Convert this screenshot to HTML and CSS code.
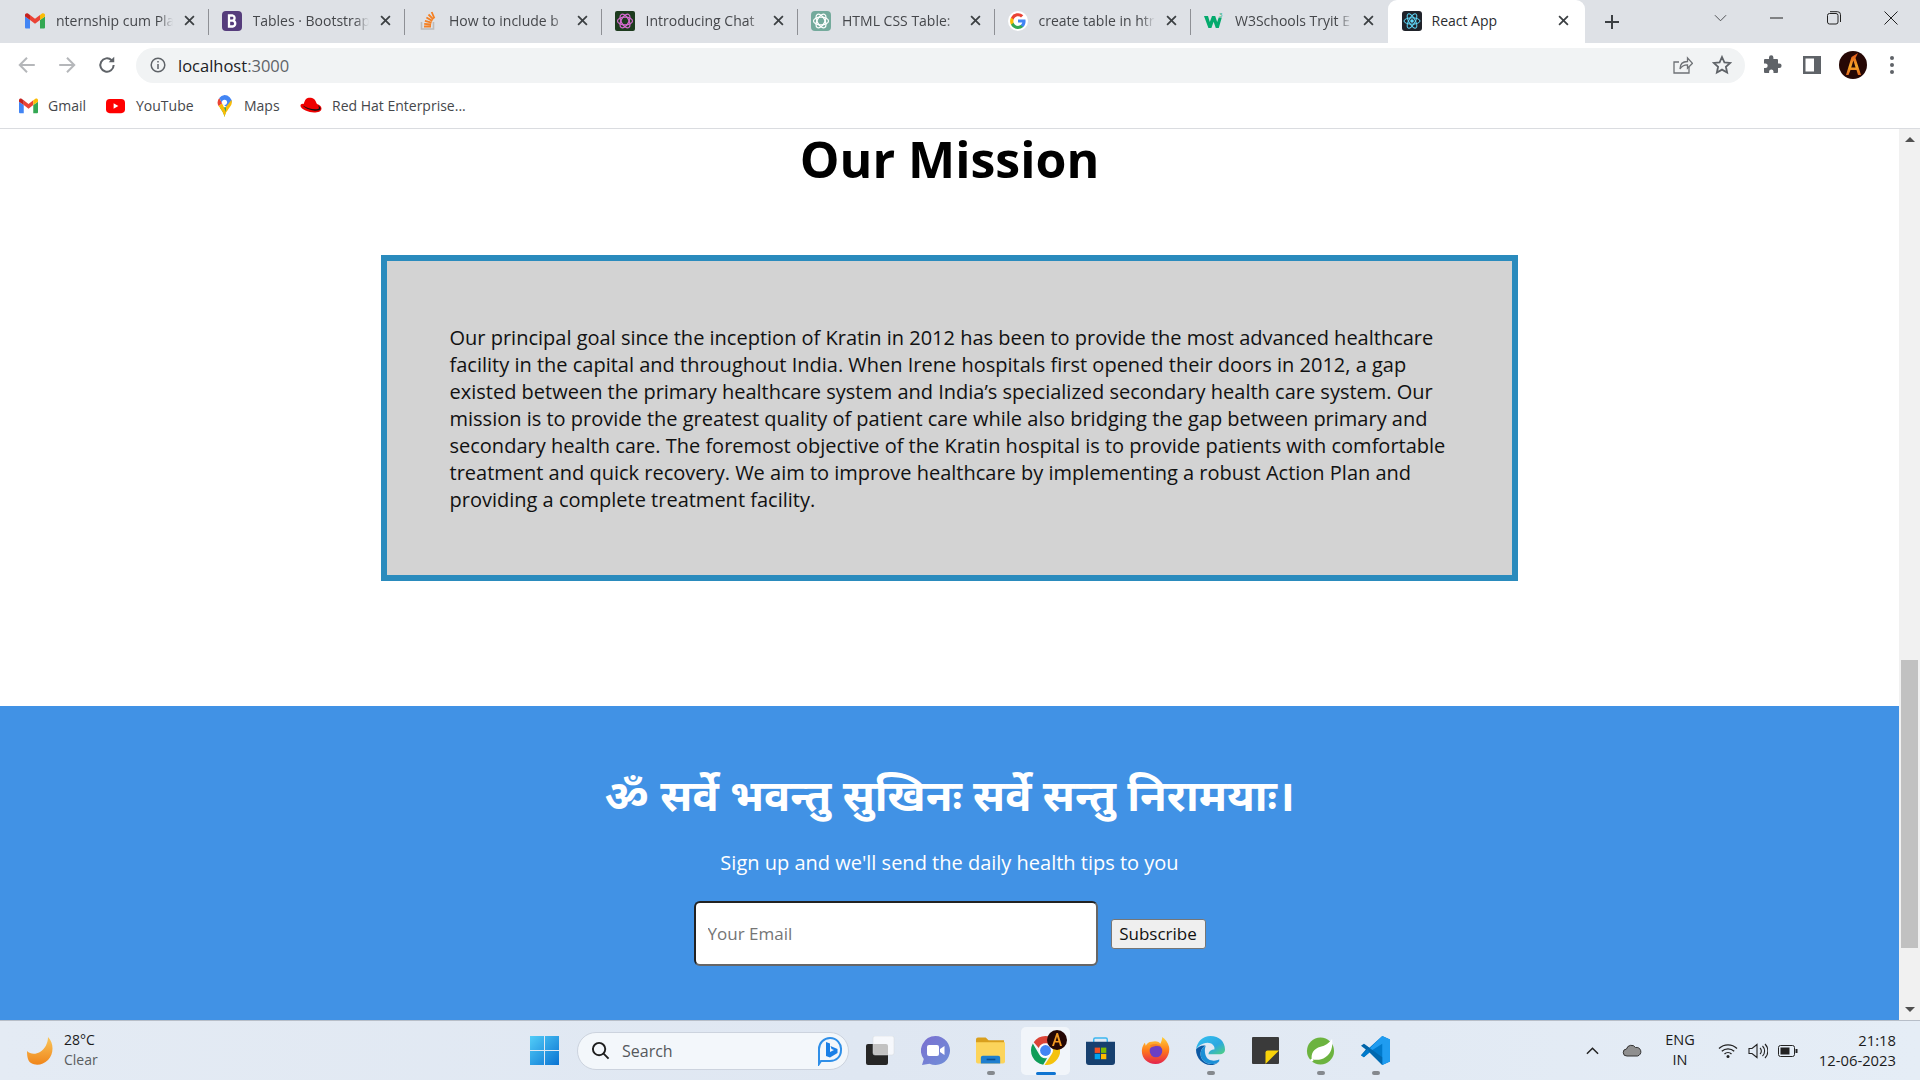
FILE: index.html
```html
<!DOCTYPE html>
<html lang="en">
<head>
<meta charset="utf-8">
<title>React App</title>
<link rel="stylesheet" href="styles.css">
</head>
<body>
<div class="screen">
  <header class="chrome">
    <div class="tabstrip">
      <div class="tab">
        <svg class="favicon" viewBox="0 0 20 16"><path fill="#4285f4" d="M1 15.500h4V7L0 3.500V14.500a1 1 0 0 0 1 1z"/><path fill="#34a853" d="M15 15.500h4a1 1 0 0 0 1-1V3.500L15 7z"/><path fill="#ea4335" d="M5 7V2l5 3.800L15 2v5l-5 3.800z"/><path fill="#c5221f" d="M0 2v1.500L5 7V2L3 .6C1.700-.3 0 .5 0 2z"/><path fill="#fbbc04" d="M15 2v5l5-3.500V2c0-1.500-1.700-2.300-3-1.400z"/></svg>
        <span class="tab-title">nternship cum Pla</span>
        <svg class="tab-close" viewBox="0 0 10 10"><path d="M1 1l8 8M9 1l-8 8"/></svg>
      </div>
      <div class="tab">
        <svg class="favicon" viewBox="0 0 20 20"><rect width="20" height="20" rx="4" fill="#563d7c"/><path fill="none" stroke="#fff" stroke-width="2.300" d="M7 4.500v11h4a3 3 0 0 0 0-5.800H7h3.600a2.700 2.700 0 0 0 0-5.200z"/></svg>
        <span class="tab-title">Tables · Bootstrap</span>
        <svg class="tab-close" viewBox="0 0 10 10"><path d="M1 1l8 8M9 1l-8 8"/></svg>
      </div>
      <div class="tab">
        <svg class="favicon" viewBox="0 0 20 20"><path fill="none" stroke="#bcbbbb" stroke-width="1.600" d="M3.500 11v7h12v-7"/><path fill="none" stroke="#f48024" stroke-width="1.800" d="M6 15.500h7M6.200 12.800l6.900.7M6.900 9.800l6.700 1.800M8.400 6.500l6 3.400M10.500 3.500l4.800 4.900M13.700 1l2.700 6.300"/></svg>
        <span class="tab-title">How to include b</span>
        <svg class="tab-close" viewBox="0 0 10 10"><path d="M1 1l8 8M9 1l-8 8"/></svg>
      </div>
      <div class="tab">
        <svg class="favicon" viewBox="0 0 20 20"><rect width="20" height="20" rx="2" fill="#1d3b1e"/><g fill="none" stroke="#d56bd0" stroke-width="1.200"><ellipse cx="10" cy="10" rx="7.500" ry="3.800"/><ellipse cx="10" cy="10" rx="7.500" ry="3.800" transform="rotate(60 10 10)"/><ellipse cx="10" cy="10" rx="7.500" ry="3.800" transform="rotate(120 10 10)"/></g></svg>
        <span class="tab-title">Introducing Chat</span>
        <svg class="tab-close" viewBox="0 0 10 10"><path d="M1 1l8 8M9 1l-8 8"/></svg>
      </div>
      <div class="tab">
        <svg class="favicon" viewBox="0 0 20 20"><rect width="20" height="20" rx="4" fill="#74aa9c"/><g fill="none" stroke="#fff" stroke-width="1.200"><ellipse cx="10" cy="10" rx="7.500" ry="3.800"/><ellipse cx="10" cy="10" rx="7.500" ry="3.800" transform="rotate(60 10 10)"/><ellipse cx="10" cy="10" rx="7.500" ry="3.800" transform="rotate(120 10 10)"/></g></svg>
        <span class="tab-title">HTML CSS Table:</span>
        <svg class="tab-close" viewBox="0 0 10 10"><path d="M1 1l8 8M9 1l-8 8"/></svg>
      </div>
      <div class="tab">
        <svg class="favicon" viewBox="0 0 20 20"><circle cx="10" cy="10" r="10" fill="#fff"/><path fill="#4285f4" d="M17.600 10.200c0-.6-.1-1.100-.2-1.600H10v3h4.300c-.2 1-.7 1.800-1.600 2.400v2h2.500c1.500-1.400 2.400-3.400 2.400-5.800z"/><path fill="#34a853" d="M10 18c2.100 0 3.800-.7 5.200-1.900l-2.500-2c-.7.500-1.600.8-2.700.8-2 0-3.800-1.400-4.400-3.200H3v2C4.300 16.300 7 18 10 18z"/><path fill="#fbbc05" d="M5.600 11.700c-.3-1-.3-2.200 0-3.300v-2H3a8 8 0 0 0 0 7.300z"/><path fill="#ea4335" d="M10 5.200c1.200 0 2.200.4 3 1.200l2.300-2.200A8 8 0 0 0 3 6.400l2.600 2C6.200 6.600 8 5.200 10 5.200z"/></svg>
        <span class="tab-title">create table in htr</span>
        <svg class="tab-close" viewBox="0 0 10 10"><path d="M1 1l8 8M9 1l-8 8"/></svg>
      </div>
      <div class="tab tab-last">
        <svg class="favicon" viewBox="0 0 20 20"><path fill="#04aa6d" d="M0 5h4l1.800 6L8 5h3.200l2 6 1.500-4.500h3.100L14.800 17h-3l-2.200-6.200L7.400 17h-3z"/><text class="w3-sup" x="15" y="6">3</text></svg>
        <span class="tab-title">W3Schools Tryit E</span>
        <svg class="tab-close" viewBox="0 0 10 10"><path d="M1 1l8 8M9 1l-8 8"/></svg>
      </div>
      <div class="tab tab-active">
        <svg class="favicon" viewBox="0 0 20 20"><rect width="20" height="20" rx="3" fill="#20232a"/><circle cx="10" cy="10" r="1.800" fill="#61dafb"/><g fill="none" stroke="#61dafb" stroke-width="1"><ellipse cx="10" cy="10" rx="8" ry="3.200"/><ellipse cx="10" cy="10" rx="8" ry="3.200" transform="rotate(60 10 10)"/><ellipse cx="10" cy="10" rx="8" ry="3.200" transform="rotate(120 10 10)"/></g></svg>
        <span class="tab-title">React App</span>
        <svg class="tab-close" viewBox="0 0 10 10"><path d="M1 1l8 8M9 1l-8 8"/></svg>
      </div>
      <svg class="new-tab" viewBox="0 0 16 16"><path d="M8 1v14M1 8h14"/></svg>
      <div class="win-controls">
        <svg class="win-chevron" viewBox="0 0 14 8"><path d="M1 1l6 6 6-6"/></svg>
        <div class="win-btn"><svg viewBox="0 0 14 14"><path d="M0 7h13"/></svg></div>
        <div class="win-btn"><svg viewBox="0 0 14 14"><rect x=".5" y="2.500" width="10.500" height="10.500" rx="2"/><path d="M3 .7h7.500a3 3 0 0 1 3 3V11"/></svg></div>
        <div class="win-btn"><svg viewBox="0 0 14 14"><path d="M.5.500l13 13M13.500.500l-13 13"/></svg></div>
      </div>
    </div>
    <div class="toolbar">
      <svg class="nav-icon nav-off" viewBox="0 0 18 18"><path d="M16 9H3M9 2.500L2.500 9 9 15.500"/></svg>
      <svg class="nav-icon nav-off" viewBox="0 0 18 18"><path d="M2 9h13M9 2.500L15.500 9 9 15.500"/></svg>
      <svg class="nav-icon" viewBox="0 0 18 18"><path d="M15 9a6 6 0 1 1-1.800-4.300"/><path class="nav-fill" d="M15.500 1.500v5h-5z"/></svg>
      <div class="omnibox">
        <svg class="info-icon" viewBox="0 0 16 16"><circle cx="8" cy="8" r="6.800"/><path d="M8 7v5M8 4v1.600"/></svg>
        <span class="url">localhost<span class="url-port">:3000</span></span>
        <svg class="share-icon" viewBox="0 0 20 20"><path d="M16 12v6H1V7h5"/><path d="M7 14c0-5 3-7.500 7.500-7.500V3l5 5.300-5 5V9.800C11 9.800 8.500 11 7 14z"/></svg>
        <svg class="star-icon" viewBox="0 0 20 20"><path d="M10 2l2.400 5.300 5.800.6-4.300 3.900 1.200 5.700L10 14.600l-5.100 2.900 1.200-5.700L1.800 7.900l5.800-.6z"/></svg>
      </div>
      <svg class="puzzle" viewBox="0 0 20 20"><path d="M7 2.500a2.200 2.200 0 0 1 4.400 0V4H15a1 1 0 0 1 1 1v3.500h1.300a2.300 2.300 0 0 1 0 4.600H16V17a1 1 0 0 1-1 1h-3.500v-1.400a2.200 2.200 0 0 0-4.400 0V18H3a1 1 0 0 1-1-1v-3.900h1.400a2.300 2.300 0 0 0 0-4.600H2V5a1 1 0 0 1 1-1h4z"/></svg>
      <svg class="side-panel" viewBox="0 0 18 18"><path fill-rule="evenodd" d="M0 0h18v18H0zM2.500 2.500v13H11v-13z"/></svg>
      <svg class="avatar" viewBox="0 0 28 28"><defs><linearGradient id="fireA" x1="0" y1="0" x2="0" y2="1"><stop offset="0" stop-color="#e2501a"/><stop offset=".6" stop-color="#f7a928"/><stop offset="1" stop-color="#e0641a"/></linearGradient></defs><circle cx="14" cy="14" r="14" fill="#260805"/><path d="M7 24L12.500 6 19 2l-2.500 5L22 24h-3l-1.500-5h-6L9.500 24zM12.200 16.500h4.400L14.400 9.500z" fill="url(#fireA)"/></svg>
      <svg class="menu-dots" viewBox="0 0 4 18"><circle cx="2" cy="2" r="2"/><circle cx="2" cy="9" r="2"/><circle cx="2" cy="16" r="2"/></svg>
    </div>
    <nav class="bookmarks">
      <div class="bookmark bm-gmail"><svg class="bm-icon" viewBox="0 0 20 16"><path fill="#4285f4" d="M1 15.500h4V7L0 3.500V14.500a1 1 0 0 0 1 1z"/><path fill="#34a853" d="M15 15.500h4a1 1 0 0 0 1-1V3.500L15 7z"/><path fill="#ea4335" d="M5 7V2l5 3.800L15 2v5l-5 3.800z"/><path fill="#c5221f" d="M0 2v1.500L5 7V2L3 .6C1.700-.3 0 .5 0 2z"/><path fill="#fbbc04" d="M15 2v5l5-3.500V2c0-1.500-1.700-2.300-3-1.400z"/></svg>Gmail</div>
      <div class="bookmark bm-yt"><svg class="bm-icon" viewBox="0 0 20 16"><rect width="20" height="15" y=".5" rx="4" fill="#f00"/><path d="M8 5l5 3-5 3z" fill="#fff"/></svg>YouTube</div>
      <div class="bookmark bm-maps"><svg class="bm-pin" viewBox="0 0 16 24"><path fill="#34a853" d="M3 14c2 3 4 5 5 10l3-11z"/><path fill="#fbbc04" d="M1.500 12L3 14c2 3 4 5 5 10 .4-2 1-3.500 1.800-5L5.500 9z"/><path fill="#ea4335" d="M2.300 3.200A8 8 0 0 0 1.500 12L5.500 9z"/><path fill="#4285f4" d="M8 0a8 8 0 0 0-5.700 3.200L5.500 9l4.500 4 3-3.500L16 8a8 8 0 0 0-8-8z"/><path fill="#fbbc04" d="M16 8c0 3-2 5-3.500 7L9.800 19l-.3-6 6-7.500c.3.800.5 1.600.5 2.500z"/><circle cx="8" cy="8" r="2.800" fill="#fff"/></svg>Maps</div>
      <div class="bookmark bm-rh"><svg class="bm-icon" viewBox="0 0 22 18"><path fill="#e00" d="M6 2c2-2 6-1.500 8 0 1.500 1 2 3.500 3 5 2.500.8 4.500 2.500 4.500 4.500 0 3-3.500 4-7.500 4-5 0-13-3-13.500-6.500C.3 7.500 2 6.500 3.700 7 4.300 5 5 3 6 2z"/><path fill="#111" d="M3 8.500c4 2.500 10 4.500 15 3.500 1-.2 1.500-1.500 0-3.500.5-.2 2.500 1.500 2.500 3 0 2-4 2.500-7 2-4-.6-9-2.500-10.500-5z"/></svg>Red Hat Enterprise...</div>
    </nav>
  </header>

  <div class="viewport">
    <main class="page">
      <h1 class="mission-title">Our Mission</h1>
      <section class="mission-box">
        <p class="mission-text">Our principal goal since the inception of Kratin in 2012 has been to provide the most advanced healthcare facility in the capital and throughout India. When Irene hospitals first opened their doors in 2012, a gap existed between the primary healthcare system and India’s specialized secondary health care system. Our mission is to provide the greatest quality of patient care while also bridging the gap between primary and secondary health care. The foremost objective of the Kratin hospital is to provide patients with comfortable treatment and quick recovery. We aim to improve healthcare by implementing a robust Action Plan and providing a complete treatment facility.</p>
      </section>
      <footer class="newsletter">
        <h2 class="shloka">ॐ सर्वे भवन्तु सुखिनः सर्वे सन्तु निरामयाः।</h2>
        <p class="signup-text">Sign up and we'll send the daily health tips to you</p>
        <form class="signup-form">
          <input class="email-input" type="email" placeholder="Your Email">
          <button class="subscribe-btn" type="button">Subscribe</button>
        </form>
      </footer>
    </main>
    <aside class="scrollbar">
      <div class="sb-arrow sb-up"></div>
      <div class="sb-track"><div class="sb-thumb"></div></div>
      <div class="sb-arrow sb-down"></div>
    </aside>
  </div>

  <footer class="taskbar">
    <div class="weather">
      <svg class="moon" viewBox="0 0 28 28"><defs><linearGradient id="moonG" x1="0" y1="0" x2="0" y2="1"><stop offset="0" stop-color="#f9c65a"/><stop offset="1" stop-color="#f0851a"/></linearGradient></defs><path fill="url(#moonG)" d="M21 0c6 6 6 17 0 23-5 5-12 6-17 3C1 24 0 20 0 14c3 3 8 4 13 1 5-3 8-9 8-15z"/></svg>
      <div class="weather-text"><span class="temp">28°C</span><span class="cond">Clear</span></div>
    </div>
    <svg class="start" viewBox="0 0 29 29"><defs><linearGradient id="winG" x1="0" y1="0" x2="1" y2="1"><stop offset="0" stop-color="#52cdf8"/><stop offset="1" stop-color="#0a73d2"/></linearGradient></defs><path fill="url(#winG)" d="M0 0h14v14H0zM15 0h14v14H15zM0 15h14v14H0zM15 15h14v14H15z"/></svg>
    <div class="search-pill">
      <svg class="search-glass" viewBox="0 0 20 20"><circle cx="8.500" cy="8.500" r="6.500"/><path d="M13 13l5.500 5.500"/></svg>
      <span class="search-label">Search</span>
      <svg class="bing" viewBox="0 0 26 30"><path fill="none" stroke="#2f8fe8" stroke-width="2" d="M13 2a11 11 0 0 1 11 12c0 7-5 11-11 11H4l-2 3V13A11 11 0 0 1 13 2z"/><path fill="#1a7fe6" d="M9 6l4 1.500V16l4-2-2.500-1-1-3 7 3v4l-7.500 4.500L9 20z"/></svg>
    </div>
    <div class="apps">
      <div class="app"><svg class="app-icon" viewBox="0 0 29 29"><rect x="0" y="8" width="22" height="21" rx="2" fill="#262626"/><rect x="7" y="0" width="21" height="19" rx="2" fill="#fff" fill-opacity=".72" stroke="#d5d8dc" stroke-width=".5"/></svg></div>
      <div class="app"><svg class="app-icon" viewBox="0 0 29 29"><defs><linearGradient id="teamsG" x1="0" y1="0" x2="1" y2="1"><stop offset="0" stop-color="#7b6fd0"/><stop offset="1" stop-color="#6f8fd8"/></linearGradient></defs><path fill="url(#teamsG)" d="M14.500 0a14.500 14.500 0 1 1-6 27.700L1 29l1.800-6A14.500 14.500 0 0 1 14.500 0z"/><rect x="6" y="9" width="12" height="11" rx="2" fill="#fff"/><path fill="#fff" d="M19 13l4.500-3v9L19 16z"/></svg></div>
      <div class="app app-on"><svg class="app-icon" viewBox="0 0 30 27"><path fill="#d99f1d" d="M0 2a2 2 0 0 1 2-2h8l3 3h16v6H0z"/><path fill="#fcd45b" d="M0 5h30v20a2 2 0 0 1-2 2H2a2 2 0 0 1-2-2z"/><path fill="#1f7fcf" d="M5 21a2 2 0 0 1 2-2h16a2 2 0 0 1 2 2v6H5z"/><rect x="11" y="22" width="9" height="1.600" fill="#0b4e8f"/></svg><i class="app-dot"></i></div>
      <div class="app app-chrome"><svg class="app-icon" viewBox="0 0 30 30"><path fill="#db4437" d="M15 0a15 15 0 0 1 13 7.500H15a7.500 7.500 0 0 0-7 4.800L2.800 6.400A15 15 0 0 1 15 0z"/><path fill="#0f9d58" d="M1.900 7.700l6.500 11.200a7.500 7.500 0 0 0 8.300 3.800l-4.100 7.100A15 15 0 0 1 1.900 7.700z"/><path fill="#f4c20d" d="M28.600 8.500H20a7.500 7.500 0 0 1 1.500 10.200L14 30A15 15 0 0 0 28.600 8.500z"/><circle cx="15" cy="15" r="6.800" fill="#fff"/><circle cx="15" cy="15" r="5.600" fill="#4285f4"/></svg><svg class="app-badge" viewBox="0 0 20 20"><circle cx="10" cy="10" r="10" fill="#260805"/><path d="M5 16L9.500 3h1.500L15 16h-2l-1-3.500H8L7 16zM8.700 11h2.700L10 6.500z" fill="#f39a22"/></svg><i class="app-line"></i></div>
      <div class="app"><svg class="app-icon" viewBox="0 0 30 30"><path fill="none" stroke="#3bb6f0" stroke-width="1.500" d="M8 8V3.500a1.500 1.500 0 0 1 1.500-1.500h11A1.500 1.500 0 0 1 22 3.500V8"/><path fill="#17406f" d="M0 6h30v21a3 3 0 0 1-3 3H3a3 3 0 0 1-3-3z"/><rect x="9" y="12" width="5.500" height="5.500" fill="#f25022"/><rect x="15.500" y="12" width="5.500" height="5.500" fill="#7fba00"/><rect x="9" y="18.500" width="5.500" height="5.500" fill="#00a4ef"/><rect x="15.500" y="18.500" width="5.500" height="5.500" fill="#ffb900"/></svg></div>
      <div class="app"><svg class="app-icon" viewBox="0 0 30 30"><defs><linearGradient id="ffG" x1="0" y1="0" x2="0" y2="1"><stop offset="0" stop-color="#ffd23a"/><stop offset=".5" stop-color="#ff7a1a"/><stop offset="1" stop-color="#e3224e"/></linearGradient></defs><path fill="url(#ffG)" d="M22 1c3 2 6 6 7 10 1.500 8-4 18-14 18C6 29 0 22 1 14c.3-3 2-6 3-7l1 3c1-2 3-4 6-4 3-1 7-1 9 2 1-2 2-5 2-7z"/><circle cx="15.500" cy="15.500" r="6.500" fill="#6b3fc4"/><path fill="#f57f25" d="M9 10c3-2 9-2 12 1-3-1-8-1-10 1z"/></svg></div>
      <div class="app app-on"><svg class="app-icon" viewBox="0 0 30 30"><defs><linearGradient id="edgeG" x1="0" y1="0" x2="1" y2="1"><stop offset="0" stop-color="#35c1f1"/><stop offset=".6" stop-color="#2ba8e0"/><stop offset="1" stop-color="#52d37a"/></linearGradient></defs><path fill="url(#edgeG)" d="M15 0c9 0 15 6 15 14 0 3-2 5-6 5H13c0-3 3-5 6-5 1-4-3-7-7-7-6 0-10 4-12 7C1 6 7 0 15 0z"/><path fill="#0c59a4" d="M0 14c2-3 6-5 10-4-4 2-6 6-5 11 1 4 5 8 11 8 3 0 6-1 8-3-2 3-6 4-9 4C7 30 0 23 0 14z"/><path fill="#1b8fd6" d="M10 10c-4 2-6 6-5 11 1 4 5 8 11 8 3 0 6-1 8-3v-2c-3 2-8 2-11 0-3-2-5-8-3-14z"/></svg><i class="app-dot"></i></div>
      <div class="app"><svg class="app-icon app-sticky" viewBox="0 0 26 26"><rect width="26" height="26" rx="1" fill="#3a3a3a"/><path fill="#f8d30a" d="M13 26V15a2 2 0 0 1 2-2h11z"/></svg></div>
      <div class="app app-on"><svg class="app-icon" viewBox="0 0 30 30"><circle cx="15" cy="15.500" r="14" fill="#6cb33f"/><path fill="#fff" d="M27 3c1 8-1 15-7 19-4 3-10 3-14 2-1-6 2-11 9-13 5-1 9-4 12-8z"/><circle cx="6" cy="25" r="1.500" fill="#fff"/></svg><i class="app-dot"></i></div>
      <div class="app app-on"><svg class="app-icon" viewBox="0 0 30 30"><path fill="#0065a9" d="M0 10l3-2 8 6-8 8-3-2 5-6z"/><path fill="#007acc" d="M22 0l8 3.500v23L22 30 9 17l-6 5-3-2 22-20z"/><path fill="#1f9cf0" d="M22 0l8 3.500v23L22 30V8l-11 7L9 13z"/><path fill="#0065a9" d="M3 8l19 14v8L9 17z" opacity=".85"/></svg><i class="app-dot"></i></div>
    </div>
    <div class="tray">
      <svg class="tray-chevron" viewBox="0 0 14 8"><path d="M1 7l6-6 6 6"/></svg>
      <svg class="tray-cloud" viewBox="0 0 20 12"><path d="M5 11.500a3.500 3.500 0 0 1-.5-7A5 5 0 0 1 13.500 3a4.300 4.300 0 0 1 2 8.500z" fill="#8f8f8f" stroke="#333" stroke-width="1"/></svg>
      <div class="lang"><span>ENG</span><span>IN</span></div>
      <svg class="tray-wifi" viewBox="0 0 20 15"><path d="M1 5.500a13 13 0 0 1 18 0M3.800 8.300a9 9 0 0 1 12.400 0M6.500 11a5 5 0 0 1 7 0"/><circle class="tray-fill" cx="10" cy="13.500" r="1.500"/></svg>
      <svg class="tray-sound" viewBox="0 0 20 16"><path d="M1 5.500h3L9 1.500v13L4 10.500H1zM12 5a4 4 0 0 1 0 6M14.500 3a7 7 0 0 1 0 10M17 1a10 10 0 0 1 0 14"/></svg>
      <svg class="tray-battery" viewBox="0 0 20 12"><rect x=".5" y=".5" width="16" height="11" rx="2"/><rect class="tray-fill" x="2.500" y="2.500" width="9" height="7"/><rect class="tray-fill" x="17.500" y="4" width="2" height="4"/></svg>
      <div class="clock"><span>21:18</span><span>12-06-2023</span></div>
    </div>
  </footer>
</div>
</body>
</html>
```
FILE: styles.css
```css
* { box-sizing: border-box; }
html, body { margin: 0; height: 100%; overflow: hidden; }
body { font-family: "Open Sans", "Noto Sans", "Noto Sans Devanagari", "DejaVu Sans", sans-serif; color: #000; background: #fff; }
.screen { height: 1080px; display: flex; flex-direction: column; }

/* browser chrome */
.chrome { flex: none; height: 129px; border-bottom: 1px solid #dadce0; background: #fff; }
.tabstrip { height: 43px; background: #dee1e6; display: flex; padding-left: 12px; }
.tab { width: 196.500px; height: 43px; display: flex; align-items: center; padding: 0 14px 2px 13px; gap: 11px; position: relative; flex: none; }
.tab::after { content: ""; position: absolute; right: 0; top: 9px; height: 26px; width: 1px; background: #8e9095; }
.tab-last::after, .tab-active::after { display: none; }
.tab-active { background: #fff; border-radius: 9px 9px 0 0; padding-left: 14px; padding-right: 16px; width: 197px; gap: 10px; }
.favicon { width: 20px; height: 20px; flex: none; }
.tab-title { flex: 1; min-width: 0; white-space: nowrap; overflow: hidden; font-size: 14px; color: #45474b; -webkit-mask-image: linear-gradient(90deg, #000 88%, transparent); mask-image: linear-gradient(90deg, #000 88%, transparent); }
.tab-active .tab-title { color: #2b2d30; -webkit-mask-image: none; mask-image: none; }
.tab-close { width: 11px; height: 11px; flex: none; fill: none; stroke: #3c4043; stroke-width: 1.600; }
.w3-sup { font-size: 6px; fill: #04aa6d; }
.new-tab { width: 16px; height: 16px; margin: 14px 0 0 19px; flex: none; fill: none; stroke: #3c4043; stroke-width: 2; }
.win-controls { margin-left: auto; margin-right: 1px; display: flex; align-items: flex-start; }
.win-chevron { width: 13px; height: 8px; margin: 14px 21px 0 0; fill: none; stroke: #45474b; stroke-width: 1; }
.win-btn { width: 57px; height: 36px; display: flex; align-items: center; justify-content: center; }
.win-btn svg { width: 14px; height: 14px; fill: none; stroke: #222; stroke-width: 1; }

.toolbar { height: 44px; display: flex; align-items: center; padding: 0 0 0 17px; }
.nav-icon { width: 20px; height: 20px; margin-right: 20px; fill: none; stroke: #5f6368; stroke-width: 1.800; flex: none; }
.nav-off { stroke: #b5b7ba; }
.nav-fill { fill: #5f6368; stroke: none; }
.omnibox { width: 1609px; height: 35px; margin-left: -1px; flex: none; background: #f1f3f4; border-radius: 18px; display: flex; align-items: center; padding: 0 13px 0 14px; }
.info-icon { width: 16px; height: 16px; fill: none; stroke: #5f6368; stroke-width: 1.500; flex: none; }
.url { margin-left: 12px; font-size: 16.500px; color: #202124; flex: 1; }
.url-port { color: #5f6368; }
.share-icon { width: 20px; height: 20px; fill: none; stroke: #6e7175; stroke-width: 1.300; flex: none; margin-right: 19px; }
.star-icon { width: 20px; height: 20px; fill: none; stroke: #5f6368; stroke-width: 1.800; flex: none; }
.puzzle { width: 20px; height: 20px; margin-left: 17px; fill: #5f6368; flex: none; }
.side-panel { width: 18px; height: 18px; margin-left: 21px; fill: #5f6368; flex: none; }
.avatar { width: 28px; height: 28px; margin-left: 18px; flex: none; }
.menu-dots { width: 4px; height: 18px; margin-left: 23px; fill: #5f6368; flex: none; }

.bookmarks { height: 41px; display: flex; align-items: center; font-size: 14px; color: #45474b; padding: 0 0 4px 19px; }
.bookmark { display: flex; align-items: center; white-space: nowrap; }
.bm-icon { width: 19px; height: 16px; flex: none; margin-right: 10px; }
.bm-pin { width: 15px; height: 22px; flex: none; margin-right: 12px; }
.bm-gmail { width: 87px; }
.bm-yt { width: 111px; }
.bm-yt .bm-icon { margin-right: 11px; }
.bm-maps { width: 83px; }
.bm-rh .bm-icon { width: 22px; height: 18px; }

/* page */
.viewport { flex: 1; min-height: 0; display: flex; }
.page { flex: 1; min-width: 0; display: flex; flex-direction: column; align-items: center; overflow: hidden; }
.mission-title { margin: 0; font-size: 50px; line-height: 60px; font-weight: 700; }
.mission-box { width: 1137px; height: 326px; margin-top: 66px; flex: none; border: 6px solid #2a8bbd; background: #d3d3d3; padding: 63px 62px 62px 62.500px; }
.mission-text { margin: 0; font-size: 20px; line-height: 27px; color: #111; }
.newsletter { margin-top: 125px; flex: 1; align-self: stretch; background: #4192e5; color: #fff; display: flex; flex-direction: column; align-items: center; }
.shloka { margin: 56px 0 0; font-size: 43.500px; line-height: 66px; font-weight: 700; white-space: nowrap; }
.signup-text { margin: 21px 0 0; font-size: 20px; line-height: 27px; }
.signup-form { margin-top: 25px; display: flex; align-items: center; gap: 13px; }
.email-input { width: 404px; height: 65px; padding: 0 12px; font: 17px "Open Sans", sans-serif; background: #fff; border: 2px solid; border-color: #222 #666 #666 #222; border-radius: 6px; }
.email-input::placeholder { color: #757575; }
.subscribe-btn { width: 95px; height: 30px; padding: 0; font: 17px "Open Sans", sans-serif; color: #111; background: #efefef; border: 1px solid #767676; border-radius: 3px; }

.scrollbar { width: 21px; flex: none; background: #f1f1f1; display: flex; flex-direction: column; align-items: center; }
.sb-arrow { width: 0; height: 0; flex: none; border-left: 5px solid transparent; border-right: 5px solid transparent; }
.sb-up { border-bottom: 5px solid #505050; margin: 8px 0 0; }
.sb-down { border-top: 5px solid #505050; margin: 0 0 8px; }
.sb-track { flex: 1; align-self: stretch; display: flex; flex-direction: column; justify-content: flex-end; padding: 0 2px 59px; }
.sb-thumb { height: 288px; background: #c1c1c1; }

/* taskbar */
.taskbar { flex: none; height: 60px; border-top: 1px solid #b7bec8; background: linear-gradient(90deg, #e4ebf4, #dfe7f2 45%, #e5edf6); display: flex; align-items: center; }
.weather { display: flex; align-items: center; width: 530px; padding-left: 27px; flex: none; }
.moon { width: 28px; height: 28px; flex: none; }
.weather-text { margin-left: 9px; padding-bottom: 2px; display: flex; flex-direction: column; font-size: 14px; line-height: 20px; color: #1b1b1b; }
.cond { color: #5a5d60; }
.start { width: 29px; height: 29px; flex: none; }
.search-pill { width: 272px; height: 38px; margin-left: 18px; flex: none; background: #f3f7fb; border: 1px solid #ccd3de; border-radius: 19px; display: flex; align-items: center; padding: 0 5px 0 13px; }
.search-glass { width: 19px; height: 19px; flex: none; fill: none; stroke: #1d1d1d; stroke-width: 2; }
.search-label { flex: 1; margin-left: 12px; font-size: 16px; color: #55585c; }
.bing { width: 26px; height: 30px; flex: none; }
.apps { display: flex; margin-left: 4px; flex: none; align-items: center; }
.app { width: 55px; height: 48px; flex: none; display: flex; align-items: center; justify-content: center; position: relative; }
.app-icon { width: 29px; height: 29px; }
.app-sticky { width: 27px; height: 27px; }
.app-chrome { background: #f1f5fa; border-radius: 5px; width: 49px; margin: 0 3px; }
.app-dot { position: absolute; left: 50%; bottom: 0; margin-left: -4px; width: 8px; height: 4px; border-radius: 2px; background: #85898e; }
.app-line { position: absolute; left: 50%; bottom: 0; margin-left: -10px; width: 20px; height: 3px; border-radius: 2px; background: #0f74d1; }
.app-badge { position: absolute; width: 20px; height: 20px; top: 3px; right: 3px; }
.tray { flex: 1; display: flex; align-items: center; padding-right: 24px; color: #1b1b1b; }
.tray-chevron { width: 13px; height: 8px; margin-left: 183px; flex: none; fill: none; stroke: #222; stroke-width: 1.600; }
.tray-cloud { width: 20px; height: 13px; margin-left: 23px; flex: none; }
.lang { width: 40px; margin-left: 18px; padding-bottom: 2px; display: flex; flex-direction: column; align-items: center; font-size: 14.500px; line-height: 20px; flex: none; }
.tray-wifi { width: 20px; height: 15px; margin-left: 18px; flex: none; fill: none; stroke: #222; stroke-width: 1.300; }
.tray-sound { width: 20px; height: 16px; margin-left: 10px; flex: none; fill: none; stroke: #222; stroke-width: 1.100; }
.tray-battery { width: 20px; height: 12px; margin-left: 10px; flex: none; fill: none; stroke: #222; stroke-width: 1; }
.tray-fill { fill: #222; stroke: none; }
.clock { margin-left: auto; padding-bottom: 2px; display: flex; flex-direction: column; align-items: flex-end; font-size: 14.800px; line-height: 20px; }
```
